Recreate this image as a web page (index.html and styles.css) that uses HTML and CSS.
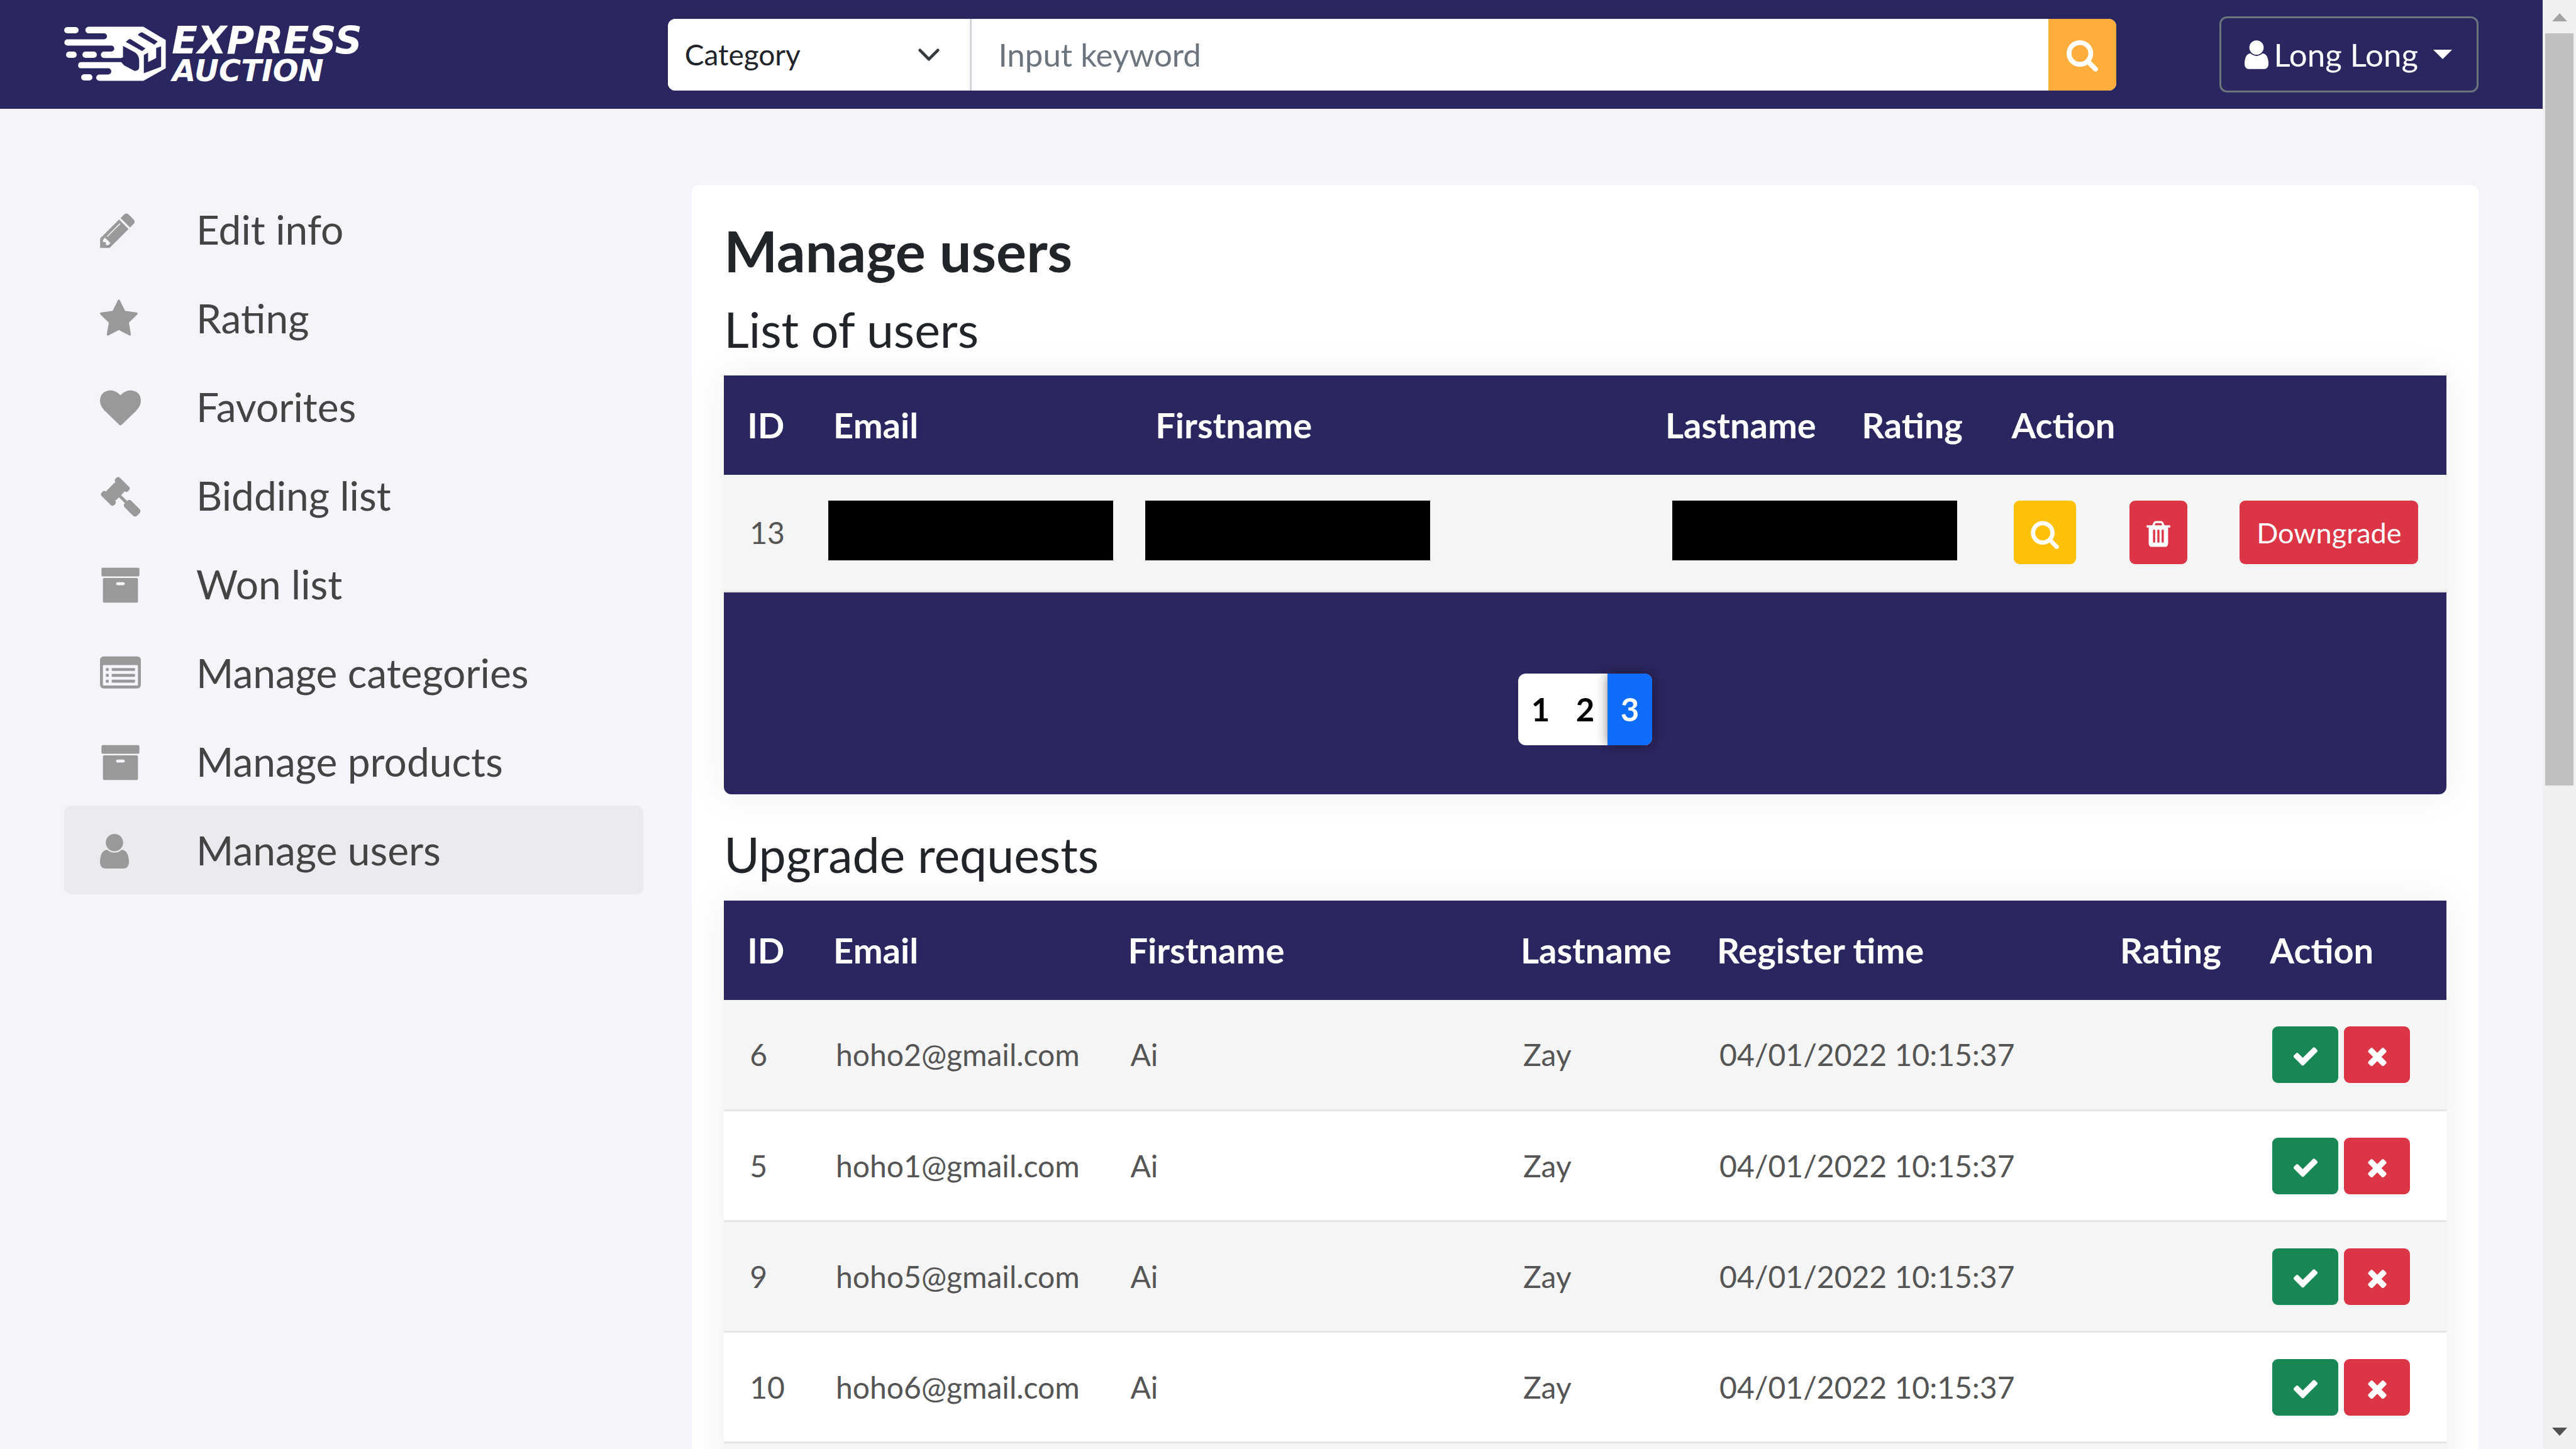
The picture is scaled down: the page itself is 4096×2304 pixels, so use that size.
FILE: index.html
```html
<!DOCTYPE html>
<html lang="en">
<head>
<meta charset="utf-8">
<title>Express Auction - Manage users</title>
<link rel="stylesheet" href="styles.css">
</head>
<body>
<svg class="sprite" aria-hidden="true">
  <symbol id="i-search" viewBox="64 0 1664 1792"><path d="M1216 832q0-185-131.500-316.500t-316.500-131.500-316.500 131.500-131.500 316.500 131.500 316.500 316.500 131.500 316.500-131.500 131.500-316.500zm512 832q0 52-38 90t-90 38q-54 0-90-38l-343-342q-179 124-399 124-143 0-273.500-55.500t-225-150-150-225-55.500-273.500 55.500-273.500 150-225 225-150 273.500-55.500 273.500 55.500 225 150 150 225 55.500 273.500q0 220-124 399l343 343q37 37 37 90z"/></symbol>
  <symbol id="i-check" viewBox="0 0 1792 1792"><path d="M1671 566q0 40-28 68l-724 724-136 136q-28 28-68 28t-68-28l-136-136-362-362q-28-28-28-68t28-68l136-136q28-28 68-28t68 28l294 295 656-657q28-28 68-28t68 28l136 136q28 28 28 68z"/></symbol>
  <symbol id="i-times" viewBox="192 0 1408 1792"><path d="M1490 1322q0 40-28 68l-136 136q-28 28-68 28t-68-28l-294-294-294 294q-28 28-68 28t-68-28l-136-136q-28-28-28-68t28-68l294-294-294-294q-28-28-28-68t28-68l136-136q28-28 68-28t68 28l294 294 294-294q28-28 68-28t68 28l136 136q28 28 28 68t-28 68l-294 294 294 294q28 28 28 68z"/></symbol>
  <symbol id="i-trash" viewBox="192 0 1408 1792"><path d="M704 1376v-704q0-14-9-23t-23-9h-64q-14 0-23 9t-9 23v704q0 14 9 23t23 9h64q14 0 23-9t9-23zm256 0v-704q0-14-9-23t-23-9h-64q-14 0-23 9t-9 23v704q0 14 9 23t23 9h64q14 0 23-9t9-23zm256 0v-704q0-14-9-23t-23-9h-64q-14 0-23 9t-9 23v704q0 14 9 23t23 9h64q14 0 23-9t9-23zm-544-992h448l-48-117q-7-9-17-11h-317q-10 2-17 11zm928 32v64q0 14-9 23t-23 9h-96v948q0 83-47 143.500t-113 60.500h-832q-66 0-113-58.500t-47-141.500v-952h-96q-14 0-23-9t-9-23v-64q0-14 9-23t23-9h309l70-167q15-37 54-63t79-26h320q40 0 79 26t54 63l70 167h309q14 0 23 9t9 23z"/></symbol>
  <symbol id="i-user" viewBox="256 0 1280 1792"><path d="M1536 1399q0 109-62.500 187t-150.500 78h-854q-88 0-150.500-78t-62.500-187q0-85 8.500-160.500t31.500-152 58.500-131 94-89 134.500-34.500q131 128 313 128t313-128q76 0 134.500 34.500t94 89 58.500 131 31.500 152 8.500 160.500zm-256-887q0 159-112.500 271.500t-271.500 112.500-271.500-112.500-112.500-271.500 112.500-271.500 271.500-112.500 271.500 112.500 112.500 271.500z"/></symbol>
  <symbol id="i-pencil" viewBox="128 0 1536 1792"><path d="M491 1536l91-91-235-235-91 91v107h128v128h107zm523-928q0-22-22-22-10 0-17 7l-542 542q-7 7-7 17 0 22 22 22 10 0 17-7l542-542q7-7 7-17zm-54-192l416 416-832 832h-416v-416zm683 96q0 53-37 90l-166 166-416-416 166-165q36-38 90-38 53 0 91 38l235 234q37 39 37 91z"/></symbol>
  <symbol id="i-star" viewBox="64 0 1664 1792"><path d="M1728 647q0 22-26 48l-363 354 86 500q1 7 1 20 0 21-10.500 35.500t-30.500 14.500q-19 0-40-12l-449-236-449 236q-22 12-40 12-21 0-31.500-14.500t-10.500-35.500q0-6 2-20l86-500-364-354q-25-27-25-48 0-37 56-46l502-73 225-455q19-41 49-41t49 41l225 455 502 73q56 9 56 46z"/></symbol>
  <symbol id="i-heart" viewBox="0 0 1792 1792"><path d="M896 1664q-26 0-44-18l-624-602q-10-8-27.500-26t-55.500-65.500-68-97.500-53.500-121-23.500-138q0-220 127-344t351-124q62 0 126.500 21.500t120 58 95.500 68.500 76 68q36-36 76-68t95.500-68.500 120-58 126.500-21.500q224 0 351 124t127 344q0 221-229 450l-623 600q-18 18-44 18z"/></symbol>
  <symbol id="i-gavel" viewBox="0 0 1792 1792"><path d="M1771 1536q0 53-37 90l-107 108q-39 37-91 37-53 0-90-37l-363-364q-38-36-38-90 0-53 43-96l-256-256-126 126q-14 14-34 14t-34-14q2 2 12.500 12t12.500 13 10 11.500 10 13.500 6 13.500 5.500 16.500 1.500 18q0 38-28 68-3 3-16.500 18t-19 20.500-18.500 16.500-22 15.500-22 9-26 4.500q-40 0-68-28l-408-408q-28-28-28-68 0-13 4.500-26t9-22 15.500-22 16.500-18.500 20.500-19 18-16.500q30-28 68-28 10 0 18 1.500t16.500 5.500 13.500 6 13.500 10 11.500 10 13 12.500 12 12.500q-14-14-14-34t14-34l348-348q14-14 34-14t34 14q-2-2-12.500-12t-12.500-13-10-11.500-10-13.500-6-13.500-5.500-16.500-1.500-18q0-38 28-68 3-3 16.500-18t19-20.500 18.500-16.500 22-15.500 22-9 26-4.500q40 0 68 28l408 408q28 28 28 68 0 13-4.500 26t-9 22-15.500 22-16.500 18.500-20.500 19-18 16.500q-30 28-68 28-10 0-18-1.500t-16.500-5.500-13.500-6-13.500-10-11.500-10-13-12.500-12-12.500q14 14 14 34t-14 34l-126 126 256 256q43-43 96-43 52 0 91 37l363 363q37 39 37 91z"/></symbol>
  <symbol id="i-archive" viewBox="0 0 1792 1792"><path d="M1088 832q0-26-19-45t-45-19h-256q-26 0-45 19t-19 45 19 45 45 19h256q26 0 45-19t19-45zm576-192v960q0 26-19 45t-45 19h-1408q-26 0-45-19t-19-45v-960q0-26 19-45t45-19h1408q26 0 45 19t19 45zm64-448v256q0 26-19 45t-45 19h-1536q-26 0-45-19t-19-45v-256q0-26 19-45t45-19h1536q26 0 45 19t19 45z"/></symbol>
  <symbol id="i-list" viewBox="0 0 1792 1792"><path fill-rule="evenodd" d="M160 128h1472q66 0 113 47t47 113v1088q0 66-47 113t-113 47h-1472q-66 0-113-47t-47-113v-1088q0-66 47-113t113-47zM160 512q-13 0-22.500 9.500t-9.500 22.500v832q0 13 9.500 22.500t22.500 9.500h1472q13 0 22.500-9.500t9.500-22.500v-832q0-13-9.500-22.500t-22.500-9.500z"/><rect x="256" y="640" width="128" height="128" rx="32"/><rect x="256" y="896" width="128" height="128" rx="32"/><rect x="256" y="1152" width="128" height="128" rx="32"/><rect x="512" y="640" width="1024" height="128" rx="32"/><rect x="512" y="896" width="1024" height="128" rx="32"/><rect x="512" y="1152" width="1024" height="128" rx="32"/></symbol>
</svg>

<div class="shell">
  <div class="page">
    <header class="topbar">
      <a class="brand" href="#" aria-label="Express Auction">
        <svg class="logo" viewBox="0 0 484 90">
          <path fill="#fff" d="M39 .5H126L161.500 21.600V66.600L126 86.500H56a5 5 0 0 1 0-10H70a4.950 4.950 0 0 0 0-9.900H26.500a5 5 0 0 1 0-9.900H91V50.200H63.500a5 5 0 0 1 0-10.200H75a4.700 4.700 0 0 0 0-9.400H5.400a5.100 5.100 0 0 1 0-10.200H63.500a4.700 4.700 0 0 0 0-9.400H39a5.200 5.200 0 0 1 0-10.500z"/>
          <g fill="#fff">
            <rect x="0" y="1" width="23" height="10" rx="5"/>
            <rect x="3" y="40" width="17" height="10" rx="5"/>
            <rect x="29" y="40" width="23" height="10" rx="5"/>
            <rect x="27" y="76" width="18" height="10" rx="5"/>
          </g>
          <g fill="#2a265f">
            <path d="M93.600 31L113 41.500Q119.300 46 119.300 55V65Q119 71 111.400 70.600L95.400 62 90.800 56.700V50.200L93.600 49z"/>
            <path d="M103 20.500q1.500-.8 3 0L129.200 35 124 39.300 98 24.500z"/>
            <path d="M123.900 9.200L148.800 24.100 143.500 29 117.500 13.900q1-3.500 6.400-4.700z"/>
            <path d="M126.700 45.500L133.500 41.800V56.700L146.300 50.200V34.600L154.200 31.800V64.100L126.700 74.400z"/>
          </g>
          <text class="logo-top" x="171" y="43">EXPRESS</text>
          <text class="logo-bottom" x="172" y="87">AUCTION</text>
        </svg>
      </a>
      <form class="search">
        <div class="category">
          <select aria-label="Category"><option>Category</option></select>
          <svg class="chevron" viewBox="0 0 16 16"><path d="m2 5 6 6 6-6"/></svg>
        </div>
        <input type="text" placeholder="Input keyword" aria-label="Input keyword">
        <button type="button" aria-label="Search"><svg class="icon"><use href="#i-search"/></svg></button>
      </form>
      <div class="account">
        <button type="button" class="account-btn">
          <svg class="icon"><use href="#i-user"/></svg>
          <span>Long Long</span>
          <i class="caret"></i>
        </button>
      </div>
    </header>

    <div class="columns">
      <nav class="sidebar">
        <a href="#"><span class="slot"><svg class="w-pencil"><use href="#i-pencil"/></svg></span>Edit info</a>
        <a href="#"><span class="slot"><svg class="w-star"><use href="#i-star"/></svg></span>Rating</a>
        <a href="#"><span class="slot"><svg><use href="#i-heart"/></svg></span>Favorites</a>
        <a href="#"><span class="slot"><svg><use href="#i-gavel"/></svg></span>Bidding list</a>
        <a href="#"><span class="slot"><svg><use href="#i-archive"/></svg></span>Won list</a>
        <a href="#"><span class="slot"><svg><use href="#i-list"/></svg></span>Manage categories</a>
        <a href="#"><span class="slot"><svg><use href="#i-archive"/></svg></span>Manage products</a>
        <a href="#" class="active"><span class="slot"><svg class="w-user"><use href="#i-user"/></svg></span>Manage users</a>
      </nav>

      <main class="panel">
        <h1>Manage users</h1>
        <h2>List of users</h2>
        <section class="card">
          <table class="users">
            <colgroup><col class="u-id"><col class="u-email"><col class="u-first"><col class="u-last"><col class="u-rating"><col class="u-view"><col class="u-delete"><col></colgroup>
            <thead><tr><th>ID</th><th>Email</th><th>Firstname</th><th>Lastname</th><th>Rating</th><th colspan="3">Action</th></tr></thead>
            <tbody>
              <tr>
                <td>13</td>
                <td class="masked masked-email"><span class="mask"></span></td>
                <td class="masked masked-first"><span class="mask"></span></td>
                <td class="masked masked-last"><span class="mask"></span></td>
                <td></td>
                <td><button type="button" class="btn tall yellow" aria-label="View"><svg class="s-search"><use href="#i-search"/></svg></button></td>
                <td><button type="button" class="btn tall red" aria-label="Delete"><svg class="s-trash"><use href="#i-trash"/></svg></button></td>
                <td><button type="button" class="btn tall red">Downgrade</button></td>
              </tr>
            </tbody>
          </table>
          <div class="card-foot">
            <nav class="pages" aria-label="Pages"><a href="#">1</a><a href="#">2</a><a href="#" class="current">3</a></nav>
          </div>
        </section>

        <h2>Upgrade requests</h2>
        <section class="card">
          <table class="requests">
            <colgroup><col class="r-id"><col class="r-email"><col class="r-first"><col class="r-last"><col class="r-time"><col class="r-rating"><col></colgroup>
            <thead><tr><th>ID</th><th>Email</th><th>Firstname</th><th>Lastname</th><th>Register time</th><th>Rating</th><th>Action</th></tr></thead>
            <tbody>
              <tr><td>6</td><td>hoho2@gmail.com</td><td>Ai</td><td>Zay</td><td>04/01/2022 10:15:37</td><td></td><td><div class="pair"><button type="button" class="btn green" aria-label="Accept"><svg><use href="#i-check"/></svg></button><button type="button" class="btn red" aria-label="Reject"><svg><use href="#i-times"/></svg></button></div></td></tr>
              <tr><td>5</td><td>hoho1@gmail.com</td><td>Ai</td><td>Zay</td><td>04/01/2022 10:15:37</td><td></td><td><div class="pair"><button type="button" class="btn green" aria-label="Accept"><svg><use href="#i-check"/></svg></button><button type="button" class="btn red" aria-label="Reject"><svg><use href="#i-times"/></svg></button></div></td></tr>
              <tr><td>9</td><td>hoho5@gmail.com</td><td>Ai</td><td>Zay</td><td>04/01/2022 10:15:37</td><td></td><td><div class="pair"><button type="button" class="btn green" aria-label="Accept"><svg><use href="#i-check"/></svg></button><button type="button" class="btn red" aria-label="Reject"><svg><use href="#i-times"/></svg></button></div></td></tr>
              <tr><td>10</td><td>hoho6@gmail.com</td><td>Ai</td><td>Zay</td><td>04/01/2022 10:15:37</td><td></td><td><div class="pair"><button type="button" class="btn green" aria-label="Accept"><svg><use href="#i-check"/></svg></button><button type="button" class="btn red" aria-label="Reject"><svg><use href="#i-times"/></svg></button></div></td></tr>
              <tr><td colspan="7"></td></tr>
            </tbody>
          </table>
        </section>
      </main>
    </div>
  </div>

  <div class="scrollbar" aria-hidden="true">
    <i class="arrow up"></i>
    <div class="track"><div class="thumb"></div></div>
    <i class="arrow down"></i>
  </div>
</div>
</body>
</html>
```
FILE: styles.css
```css
:root {
  --navy: #2a265f;
  --red: #dc3545;
  --radius: 12px;
}

* {
  box-sizing: border-box;
}

body {
  margin: 0;
  font-family: Lato, "Liberation Sans", sans-serif;
  font-size: 48px;
  line-height: 72px;
  color: #212529;
  background: #f5f4fa;
}

button,
input,
select {
  font: inherit;
  margin: 0;
  border: 0;
}

a {
  color: inherit;
  text-decoration: none;
}

svg {
  display: block;
  fill: currentColor;
}

.sprite {
  display: none;
}

.shell {
  display: flex;
  height: 100vh;
  overflow: hidden;
}

.page {
  flex: 1;
  min-width: 0;
}

/* Top bar */
.topbar {
  display: grid;
  grid-template-columns: 25% 60% 15%;
  align-items: center;
  padding: 26px 102px;
  background: var(--navy);
  color: #fff;
  font-size: 51px;
}

.logo {
  width: 484px;
  height: 90px;
  overflow: visible;
}

.logo-top,
.logo-bottom {
  font-family: "DejaVu Sans", sans-serif;
  font-weight: 700;
  font-style: oblique;
  fill: #fff;
}

.logo-top {
  font-size: 60px;
}

.logo-bottom {
  font-size: 48px;
}

.search {
  display: flex;
  height: 114px;
  border-radius: var(--radius);
  overflow: hidden;
  background: #fff;
}

.category {
  display: grid;
  flex: 0 0 21%;
  align-items: center;
  border-right: 3px solid #ced4da;
}

.category select,
.chevron {
  grid-area: 1 / 1;
}

.category select {
  height: 100%;
  padding: 0 27px;
  appearance: none;
  background: #fff;
  color: #212529;
  font-size: 46px;
}

.chevron {
  justify-self: end;
  width: 38px;
  height: 38px;
  margin-right: 46px;
  fill: none;
  stroke: #343a40;
  stroke-width: 2;
  stroke-linecap: round;
  stroke-linejoin: round;
  pointer-events: none;
}

.search input {
  flex: 1;
  min-width: 0;
  padding: 0 42px;
  background: #fff;
}

.search input::placeholder {
  color: #6c757d;
  opacity: 1;
}

.search button {
  display: flex;
  flex: 0 0 108px;
  align-items: center;
  justify-content: center;
  padding: 0;
  background: #ffae3d;
  color: #fff;
}

.search .icon {
  width: 50px;
  height: 54px;
}

.account {
  display: flex;
  justify-content: flex-end;
}

.account-btn {
  display: flex;
  align-items: center;
  height: 121px;
  padding: 0 39px 0 37px;
  border: 3px solid #6c757d;
  border-radius: var(--radius);
  background: none;
  color: #fff;
}

.account-btn .icon {
  width: 38px;
  height: 54px;
  margin-right: 8px;
}

.caret {
  margin-left: 24px;
  border-top: 15px solid;
  border-left: 15px solid transparent;
  border-right: 15px solid transparent;
}

/* Body columns */
.columns {
  display: grid;
  grid-template-columns: 24% 74%;
  justify-content: space-between;
  align-items: start;
  padding: 121px 102px 0;
}

.sidebar a {
  display: flex;
  align-items: center;
  height: 141px;
  padding-left: 57px;
  border-radius: var(--radius);
  font-size: 64px;
  color: #444;
}

.sidebar .active {
  background: #ebeaef;
}

.slot {
  flex: 0 0 153px;
  padding-top: 3px;
  color: #999;
}

.slot svg {
  width: 65px;
  height: 65px;
}

.slot .w-pencil {
  width: 56px;
}

.slot .w-star {
  width: 60px;
}

.slot .w-user {
  width: 46px;
}

.panel {
  padding: 50px 51px;
  border-radius: var(--radius);
  background: #fff;
}

h1,
h2 {
  margin: 0;
}

h1 {
  margin-bottom: 24px;
  font-size: 90px;
  line-height: 108px;
  font-weight: 700;
}

h2 {
  margin-bottom: 27px;
  font-size: 77px;
  line-height: 94px;
  font-weight: 400;
}

/* Table cards */
.card {
  margin-bottom: 48px;
  border-radius: 0 0 var(--radius) var(--radius);
  box-shadow: 0 0 60px rgba(0, 0, 0, 0.07);
}

table {
  width: 100%;
  table-layout: fixed;
  border-collapse: collapse;
}

th {
  height: 158px;
  padding: 0 37px;
  background: var(--navy);
  color: #fff;
  font-size: 56px;
  font-weight: 700;
  text-align: left;
  white-space: nowrap;
}

td {
  height: 176px;
  padding: 0 41px;
  border-bottom: 3px solid #e6e6e6;
  color: #555;
  white-space: nowrap;
}

.users td {
  height: 185px;
}

tbody tr:nth-child(odd) {
  background: #f5f5f5;
}

.u-id,
.r-id { width: 5%; }
.u-email { width: 18.7%; }
.u-first { width: 29.6%; }
.u-last { width: 11.4%; }
.u-rating { width: 8.7%; }
.u-view { width: 6.7%; }
.u-delete { width: 6.4%; }

.r-email { width: 17.1%; }
.r-first { width: 22.8%; }
.r-last { width: 11.4%; }
.r-time { width: 23.4%; }
.r-rating { width: 8.7%; }

.masked-email { padding: 0 0 6px 29px; }
.masked-first { padding: 0 0 6px 21px; }
.masked-last { padding: 0 0 6px 48px; }

.mask {
  display: block;
  width: 453px;
  height: 95px;
  background: #000;
}

.btn {
  display: flex;
  align-items: center;
  justify-content: center;
  width: 105px;
  height: 90px;
  padding: 0;
  border-radius: 9px;
  color: #fff;
  font-size: 45px;
}

.btn svg {
  width: 44px;
  height: 44px;
  margin-top: 4px;
}

.btn.tall {
  width: auto;
  height: 101px;
  padding: 0 27px;
}

.btn .s-search {
  width: 45px;
  height: 48px;
}

.btn .s-trash {
  width: 38px;
  height: 48px;
}

.green { background: #198754; }
.red { background: var(--red); }
.yellow { background: #ffc107; }

.pair {
  display: flex;
  gap: 9px;
}

.card-foot {
  display: flex;
  justify-content: center;
  padding: 129px 0 78px;
  border-radius: 0 0 var(--radius) var(--radius);
  background: var(--navy);
}

.pages {
  display: flex;
  border-radius: var(--radius);
  background: #fff;
  color: #000;
  font-size: 51px;
  font-weight: 700;
}

.pages a {
  width: 71px;
  line-height: 114px;
  text-align: center;
}

.pages .current {
  border-radius: 0 var(--radius) var(--radius) 0;
  background: #0d6efd;
  color: #fff;
  box-shadow: 0 0 18px rgba(30, 10, 10, 0.5);
}

/* Window scrollbar */
.scrollbar {
  display: flex;
  flex: 0 0 53px;
  flex-direction: column;
  align-items: center;
  justify-content: space-between;
  padding: 21px 0;
  background: #f0f0f0;
}

.arrow {
  border-left: 12px solid transparent;
  border-right: 12px solid transparent;
}

.up { border-bottom: 13px solid #a3a3a3; }
.down { border-top: 13px solid #505050; }

.track {
  flex: 1;
  width: 45px;
  margin: 19px 0;
}

.thumb {
  height: 54.4%;
  background: #c0c0c0;
}
```
